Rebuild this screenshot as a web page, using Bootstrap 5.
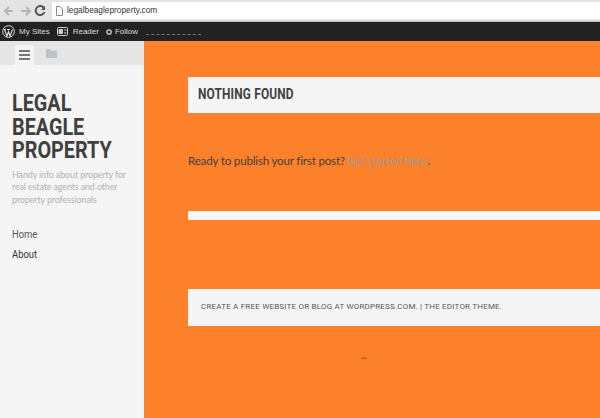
<!DOCTYPE html>
<html lang="en">
<head>
<meta charset="UTF-8">
<title>legalbeagleproperty.com</title>
<link href="https://cdn.jsdelivr.net/npm/bootstrap@5.3.1/dist/css/bootstrap.min.css" rel="stylesheet">
<script src="https://cdn.jsdelivr.net/npm/bootstrap@5.3.1/dist/js/bootstrap.bundle.min.js"></script>
<style>
  html, body { height: 418px; overflow: hidden; }
  body { background: #fc812a; font-family: Lato, "Open Sans", sans-serif; color: #404040; }
  .chrome_bar { height: 22px; background: #e4e4e4; border-bottom: 1px solid #bdbdbd; padding-left: 3px; }
  .url_box { height: 17px; margin-left: 5px; background: #fff; font: 8.3px/17px "Liberation Sans", sans-serif; color: #333; padding-left: 4px; gap: 4px; }
  .admin_bar { height: 19px; background: #222; color: #ddd; font: 8px/19px "Liberation Sans", sans-serif; padding-left: 2px; }
  .wp_logo { margin-right: 4px; }
  .reader_icon { margin: 0 5px 0 7px; }
  .follow_icon { margin: 0 3px 0 7px; }
  .admin_blank { width: 55px; border-bottom: 1px dashed #777; height: 7px; margin-left: 8px; }
  .page_wrap { height: 377px; }
  .side_col { width: 144px; background: #f5f5f5; flex: none; }
  .side_tabs { height: 24px; background: #e5e5e5; padding-left: 15px; gap: 12px; }
  .side_tab { width: 19px; height: 20px; background: #f5f5f5; border-radius: 3px 3px 0 0; }
  .side_body { padding: 27px 8px 0 12px; }
  .site_name { font: 700 24px/23.5px Roboto, sans-serif; color: #404040; margin: 0; white-space: nowrap; transform: scaleX(.825); transform-origin: left; }
  .site_desc { font-size: 9px; letter-spacing: -.15px; line-height: 12.7px; color: #b3b3b3; margin: 6px 0 0; }
  .side_links { margin-top: 17px; }
  .side_links a { display: block; font: 11.5px/20px Roboto, sans-serif; text-decoration: none; transform: scaleX(.82); transform-origin: left; }
  .home_link { color: #555; }
  .about_link { color: #333; }
  .main_col { padding-left: 44px; }
  .white_box { background: #f5f5f5; }
  .title_box { height: 36px; margin-top: 36px; padding-left: 10px; }
  .title_text { display: block; font: 700 14.5px/35px Roboto, sans-serif; letter-spacing: .2px; transform: scaleX(.82); transform-origin: left; }
  .post_text { font-size: 11.5px; letter-spacing: -.15px; line-height: 16px; margin: 40px 0 0; color: #404040; }
  .post_text a { color: #9a9a9a; text-decoration: none; }
  .thin_box { height: 9px; margin-top: 42px; }
  .foot_box { height: 37px; margin-top: 69px; padding-left: 13px; font: 8px/35px Roboto, sans-serif; letter-spacing: .2px; color: #55555f; }
  .tiny_mark { display: inline-block; font-size: 5px; line-height: 6px; margin: 29px 0 0 175px; color: #333; transform: rotate(90deg); }
</style>
</head>
<body>
<div class="chrome_bar d-flex align-items-center">
  <svg width="44" height="12" viewBox="0 0 44 12" fill="none" stroke-width="2" class="flex-shrink-0">
    <path d="M10 6H2M6 2 2 6l4 4" stroke="#b5b5b5"/>
    <path d="M18 6h9M23 2l4 4-4 4" stroke="#b5b5b5"/>
    <path d="M41 3a4.500 4.500 0 1 0 .5 4" stroke="#555"/>
    <path d="M42 1v4h-4z" fill="#555"/>
  </svg>
  <div class="url_box d-flex align-items-center flex-grow-1">
    <svg width="7" height="10" viewBox="0 0 7 10" fill="#fff" stroke="#888"><path d="M.5.5h3.500l2.500 2.500v6.500h-6z"/></svg>
    <span>legalbeagleproperty.com</span>
  </div>
</div>
<div class="admin_bar d-flex align-items-center">
  <svg width="13" height="13" viewBox="0 0 13 13" class="wp_logo" fill="none" stroke="#ddd">
    <circle cx="6.500" cy="6.500" r="5.800"/>
    <path d="M2.500 4.500 5 11l1.500-4.500L8 11l2.500-6.500M2 4.500h2M5 4.500h3" stroke-width="1.100"/>
  </svg>
  <span>My Sites</span>
  <svg width="11" height="9" viewBox="0 0 11 9" class="reader_icon" fill="none" stroke="#ccc">
    <rect x=".5" y=".5" width="10" height="8" rx="1"/>
    <path d="M2 2.500h3.500v4H2z" fill="#ccc"/><path d="M7 3h2.500M7 6h2.500"/>
  </svg>
  <span>Reader</span>
  <svg width="6" height="6" viewBox="0 0 6 6" class="follow_icon" fill="none" stroke="#ccc" stroke-width="1.300"><circle cx="3" cy="3" r="2.200"/></svg>
  <span>Follow</span>
  <div class="admin_blank"></div>
</div>
<div class="page_wrap d-flex">
  <div class="side_col">
    <div class="side_tabs d-flex align-items-end">
      <div class="side_tab d-flex align-items-center justify-content-center">
        <svg width="11" height="10" viewBox="0 0 11 10" fill="#777"><path d="M0 0h11v2H0zM0 4h11v2H0zM0 8h11v2H0z"/></svg>
      </div>
      <svg width="11" height="9" viewBox="0 0 11 9" fill="#bcc3c8" class="align-self-center"><path d="M0 0h4l1 1.500h6V9H0z"/></svg>
    </div>
    <div class="side_body">
      <h1 class="site_name">LEGAL<br>BEAGLE<br>PROPERTY</h1>
      <p class="site_desc">Handy info about property for real estate agents and other property professionals</p>
      <div class="side_links">
        <a href="#" class="home_link">Home</a>
        <a href="#" class="about_link">About</a>
      </div>
    </div>
  </div>
  <div class="main_col flex-grow-1">
    <div class="white_box title_box"><span class="title_text">NOTHING FOUND</span></div>
    <p class="post_text">Ready to publish your first post? <a href="#">Get started here</a>.</p>
    <div class="white_box thin_box"></div>
    <div class="white_box foot_box">CREATE A FREE WEBSITE OR BLOG AT WORDPRESS.COM. | THE EDITOR THEME.</div>
    <div class="tiny_mark">:)</div>
  </div>
</div>
</body>
</html>
